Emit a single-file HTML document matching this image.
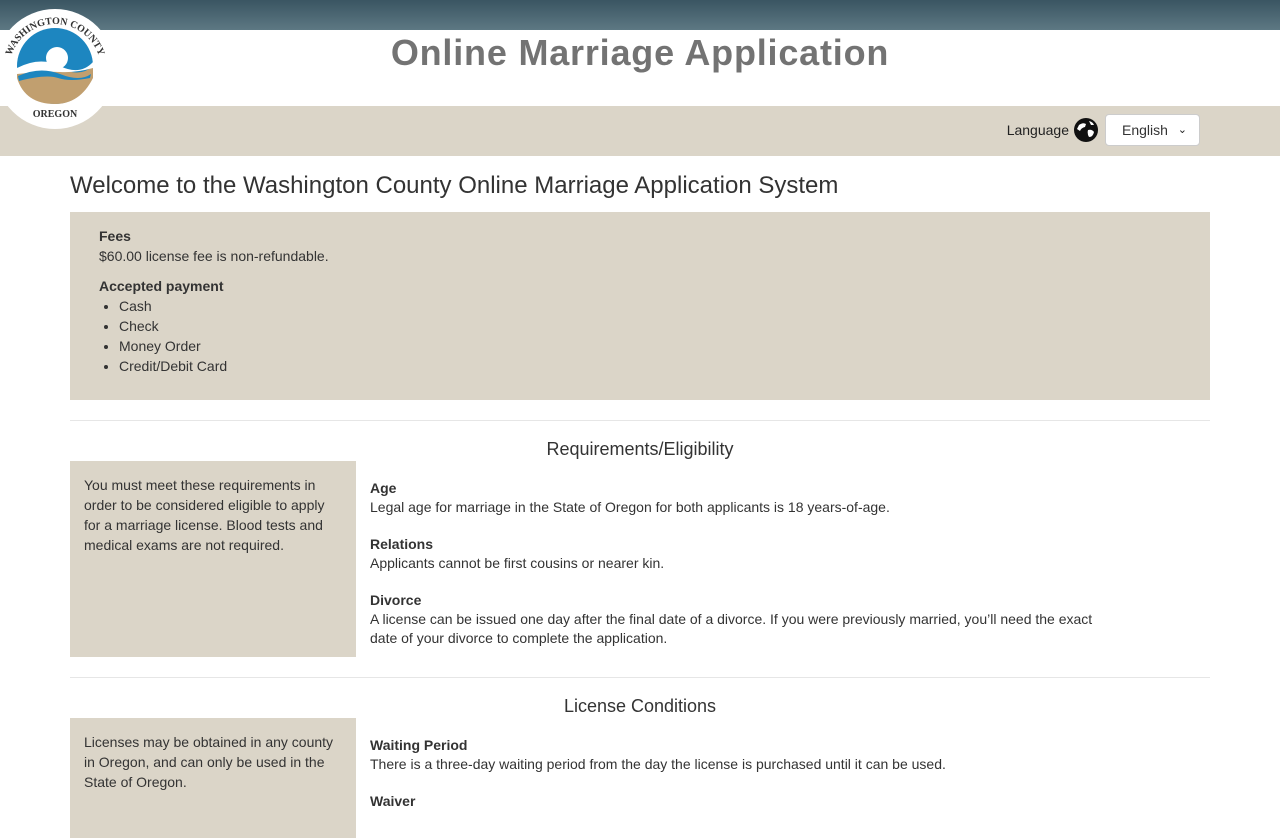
<!DOCTYPE html>
<html><head><style>
body{margin:0;font-family:"Liberation Sans",Arial,sans-serif;color:#333;font-size:14px;background:#fff;}
.top{height:30px;background:linear-gradient(#3a5562,#5d7883);}
.hdr{height:76px;text-align:center;}
.hdr h1{margin:0;padding-top:4px;font-size:36px;color:#737373;font-weight:bold;letter-spacing:0.8px;line-height:38px;}
.band{height:50px;background:#dbd5c8;position:relative;}
.lang{position:absolute;right:80px;top:8px;display:flex;align-items:center;}
.lang span{font-size:14px;color:#222;margin-right:4px;}
.sel{width:95px;height:32px;background:#fff;border:1px solid #ccc;border-radius:4px;box-sizing:border-box;margin-left:6px;font-size:14px;line-height:30px;padding-left:16px;color:#333;position:relative;}
.logo{position:absolute;left:0;top:8px;z-index:5;}
.wrap{margin:0 70px;}
h2{font-weight:normal;font-size:24px;margin:16px 0 12px;color:#333;}
.fees{background:#dbd5c8;padding:14px 29px 22px;height:152px;}
b{font-weight:bold;}
p{margin:0;line-height:20px;}
ul{margin:0;padding-left:20px;line-height:20px;}
hr{border:0;border-top:1px solid #e6e6e6;margin:20px 0 18px;}
h3{text-align:center;font-weight:normal;font-size:18px;margin:0 0 1px;}
.row{display:flex;}
.left{width:286px;background:#dbd5c8;padding:14px 14px;box-sizing:border-box;line-height:20px;}
.right{padding:18px 14px;width:740px;}
.right p{margin-bottom:18px;line-height:19px;}
</style></head><body>
<div class="top"></div>
<svg class="logo" width="112" height="124" viewBox="0 0 112 124">
<circle cx="55" cy="61" r="60" fill="#fff"/>
<circle cx="55" cy="58" r="38" fill="#1d86c0"/>
<circle cx="57" cy="50" r="11" fill="#fff"/>
<path d="M17 62 Q40 50 60 60 T93 58 L93 70 Q80 96 55 96 Q25 96 17 70Z" fill="#c19f6f"/>
<path d="M17 60 Q40 48 60 58 T93 54 L93 60 Q75 65 60 64 T17 66Z" fill="#fff"/>
<path d="M18 68 Q40 58 60 66 T91 66 L90 70 Q70 74 58 70 T19 73Z" fill="#1d86c0"/>
<path id="arc" d="M9 62 A46 46 0 0 1 101 62" fill="none"/>
<text font-size="10" font-weight="bold" fill="#333" font-family="Liberation Serif"><textPath href="#arc" startOffset="50%" text-anchor="middle">WASHINGTON COUNTY</textPath></text>
<text x="55" y="109" font-size="10" font-weight="bold" fill="#333" text-anchor="middle" font-family="Liberation Serif">OREGON</text>
</svg>
<div class="hdr"><h1>Online Marriage Application</h1></div>
<div class="band"><div class="lang"><span>Language</span>
<svg width="26" height="26" viewBox="0 0 26 26"><circle cx="13" cy="13" r="12" fill="#111"/><path d="M6 8 Q10 5 13 7 L12 10 Q8 11 7 14 L4 12Z M15 13 Q19 12 21 15 Q20 20 16 20 Q14 17 15 13Z M16 4 Q20 5 21 8 L18 8Z" fill="#fff"/></svg>
<div class="sel">English<span style="position:absolute;right:8px;top:0;font-size:11px">&#8964;</span></div></div></div>
<div class="wrap">
<h2>Welcome to the Washington County Online Marriage Application System</h2>
<div class="fees">
<p><b>Fees</b></p><p>$60.00 license fee is non-refundable.</p>
<p style="margin-top:10px"><b>Accepted payment</b></p>
<ul><li>Cash</li><li>Check</li><li>Money Order</li><li>Credit/Debit Card</li></ul>
</div>
<hr>
<h3>Requirements/Eligibility</h3>
<div class="row" style="height:196px"><div class="left">You must meet these requirements in order to be considered eligible to apply for a marriage license. Blood tests and medical exams are not required.</div>
<div class="right"><p><b>Age</b><br>Legal age for marriage in the State of Oregon for both applicants is 18 years-of-age.</p>
<p><b>Relations</b><br>Applicants cannot be first cousins or nearer kin.</p>
<p><b>Divorce</b><br>A license can be issued one day after the final date of a divorce. If you were previously married, you’ll need the exact date of your divorce to complete the application.</p></div></div>
<hr>
<h3>License Conditions</h3>
<div class="row" style="height:120px"><div class="left">Licenses may be obtained in any county in Oregon, and can only be used in the State of Oregon.</div>
<div class="right"><p><b>Waiting Period</b><br>There is a three-day waiting period from the day the license is purchased until it can be used.</p><p><b>Waiver</b></p></div></div>
</div>
</body></html>
